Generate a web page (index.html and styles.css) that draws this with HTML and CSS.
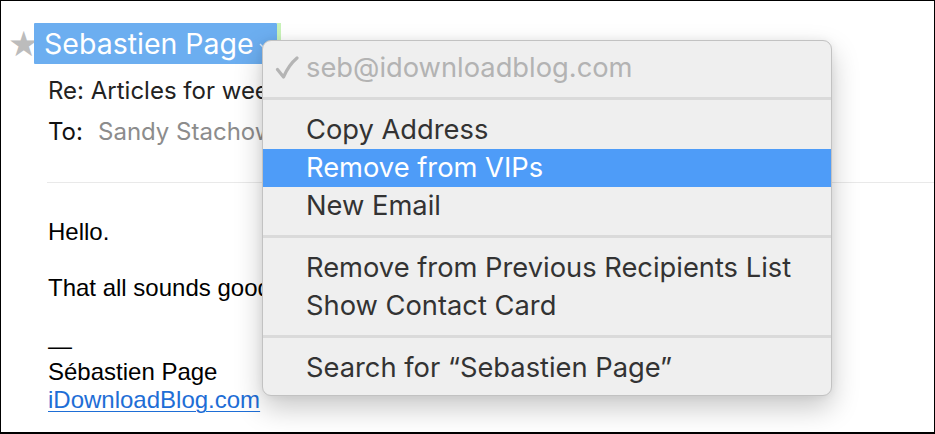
FILE: index.html
```html
<!DOCTYPE html>
<html>
<head>
<meta charset="utf-8">
<link rel="stylesheet" href="styles.css">
</head>
<body>
<div class="frame">
  <div class="header">
    <div class="from-row">
      <span class="star">★</span>
      <span class="chip">Sebastien Page<svg class="chev" width="10" height="7" viewBox="0 0 10 7"><polyline points="1,1 5,5 9,1" fill="none" stroke="#d6e8fb" stroke-width="1.4"/></svg></span>
      <span class="green"></span>
    </div>
    <div class="subject">Re: Articles for weekend</div>
    <div class="to-row"><span class="to-label">To:</span><span class="to-name">Sandy Stachowiak</span></div>
  </div>
  <div class="rule"></div>
  <div class="body">
    <p class="para">Hello.</p>
    <p class="para">That all sounds good to me.</p>
    <div class="sig">
      <div class="dash">—</div>
      <div>Sébastien Page</div>
      <a class="link" href="#">iDownloadBlog.com</a>
    </div>
  </div>

  <div class="menu">
    <div class="item disabled"><svg class="check" width="24" height="24" viewBox="0 0 24 24"><path d="M2.5 13.5 L8.5 21 C12 13 16 7 22 2" fill="none" stroke="#b4b4b4" stroke-width="3.2" stroke-linecap="round" stroke-linejoin="round"/></svg>seb@idownloadblog.com</div>
    <div class="sep"></div>
    <div class="item">Copy Address</div>
    <div class="item selected">Remove from VIPs</div>
    <div class="item">New Email</div>
    <div class="sep"></div>
    <div class="item">Remove from Previous Recipients List</div>
    <div class="item">Show Contact Card</div>
    <div class="sep"></div>
    <div class="item">Search for “Sebastien Page”</div>
  </div>
</div>
</body>
</html>
```

FILE: styles.css
```css
* { box-sizing: border-box; }
html, body { margin: 0; padding: 0; background: #fff; }
.frame {
  position: relative;
  width: 935px;
  height: 434px;
  border: 1px solid #000;
  border-bottom-width: 2px;
  overflow: hidden;
  font-family: "Liberation Sans", Arial, sans-serif;
  color: #000;
}
.header {
  font-family: "Inter", "Liberation Sans", sans-serif;
  padding-top: 22px;
}
.from-row {
  display: flex;
  align-items: center;
  height: 41px;
}
.star {
  width: 26px;
  margin-left: 7px;
  font-size: 35px;
  color: #bcbcbc;
  line-height: 41px;
  font-family: "DejaVu Sans", sans-serif;
  padding-top: 1px;
}
.chip {
  display: flex;
  align-items: center;
  height: 41px;
  width: 243px;
  background: #6caef0;
  color: #fff;
  font-size: 28.5px;
  padding-left: 10px;
  border-radius: 1px;
}
.chev { margin-left: 5px; margin-top: 6px; flex: none; }
.green {
  width: 4px;
  height: 41px;
  background: #c8f2b8;
}
.subject {
  margin-left: 47px;
  margin-top: 12px;
  font-size: 24px;
  color: #222;
  line-height: 30px;
}
.to-row {
  margin-left: 47px;
  margin-top: 11px;
  font-size: 24px;
  line-height: 30px;
  display: flex;
}
.to-label { color: #111; width: 50px; }
.to-name { color: #8c8c8c; }
.rule {
  margin-left: 46px;
  margin-top: 35px;
  height: 1px;
  background: #e9e9e9;
}
.body {
  padding-left: 47px;
  padding-top: 35px;
  font-size: 24px;
  line-height: 28px;
}
.para { margin: 0 0 28px 0; }
.sig { line-height: 28px; padding-top: 4px; }
.dash { line-height: 24px; }
.link { color: #1e6ed6; text-decoration: underline; text-decoration-thickness: 1px; text-underline-offset: 3px; }

.menu {
  position: absolute;
  left: 261px;
  top: 39px;
  width: 570px;
  height: 356px;
  background: #efefef;
  border: 1px solid #c2c2c2;
  border-radius: 9px;
  box-shadow: 0 12px 28px rgba(0,0,0,0.22), 0 0 8px rgba(0,0,0,0.06);
  padding: 8px 0 9px 0;
  font-family: "Inter", "Liberation Sans", sans-serif;
  font-size: 27.3px;
  color: #333;
}
.item {
  height: 38px;
  line-height: 38px;
  padding-left: 43px;
  position: relative;
  white-space: nowrap;
}
.item.disabled { color: #b3b3b3; }
.check {
  position: absolute;
  left: 12px;
  top: 7px;
}
.item.selected { background: #4e9cf8; color: #fff; }
.sep {
  height: 24px;
  position: relative;
}
.sep::after {
  content: "";
  position: absolute;
  left: 0; right: 0; top: 10px;
  height: 3px;
  background: #dadada;
}
```
